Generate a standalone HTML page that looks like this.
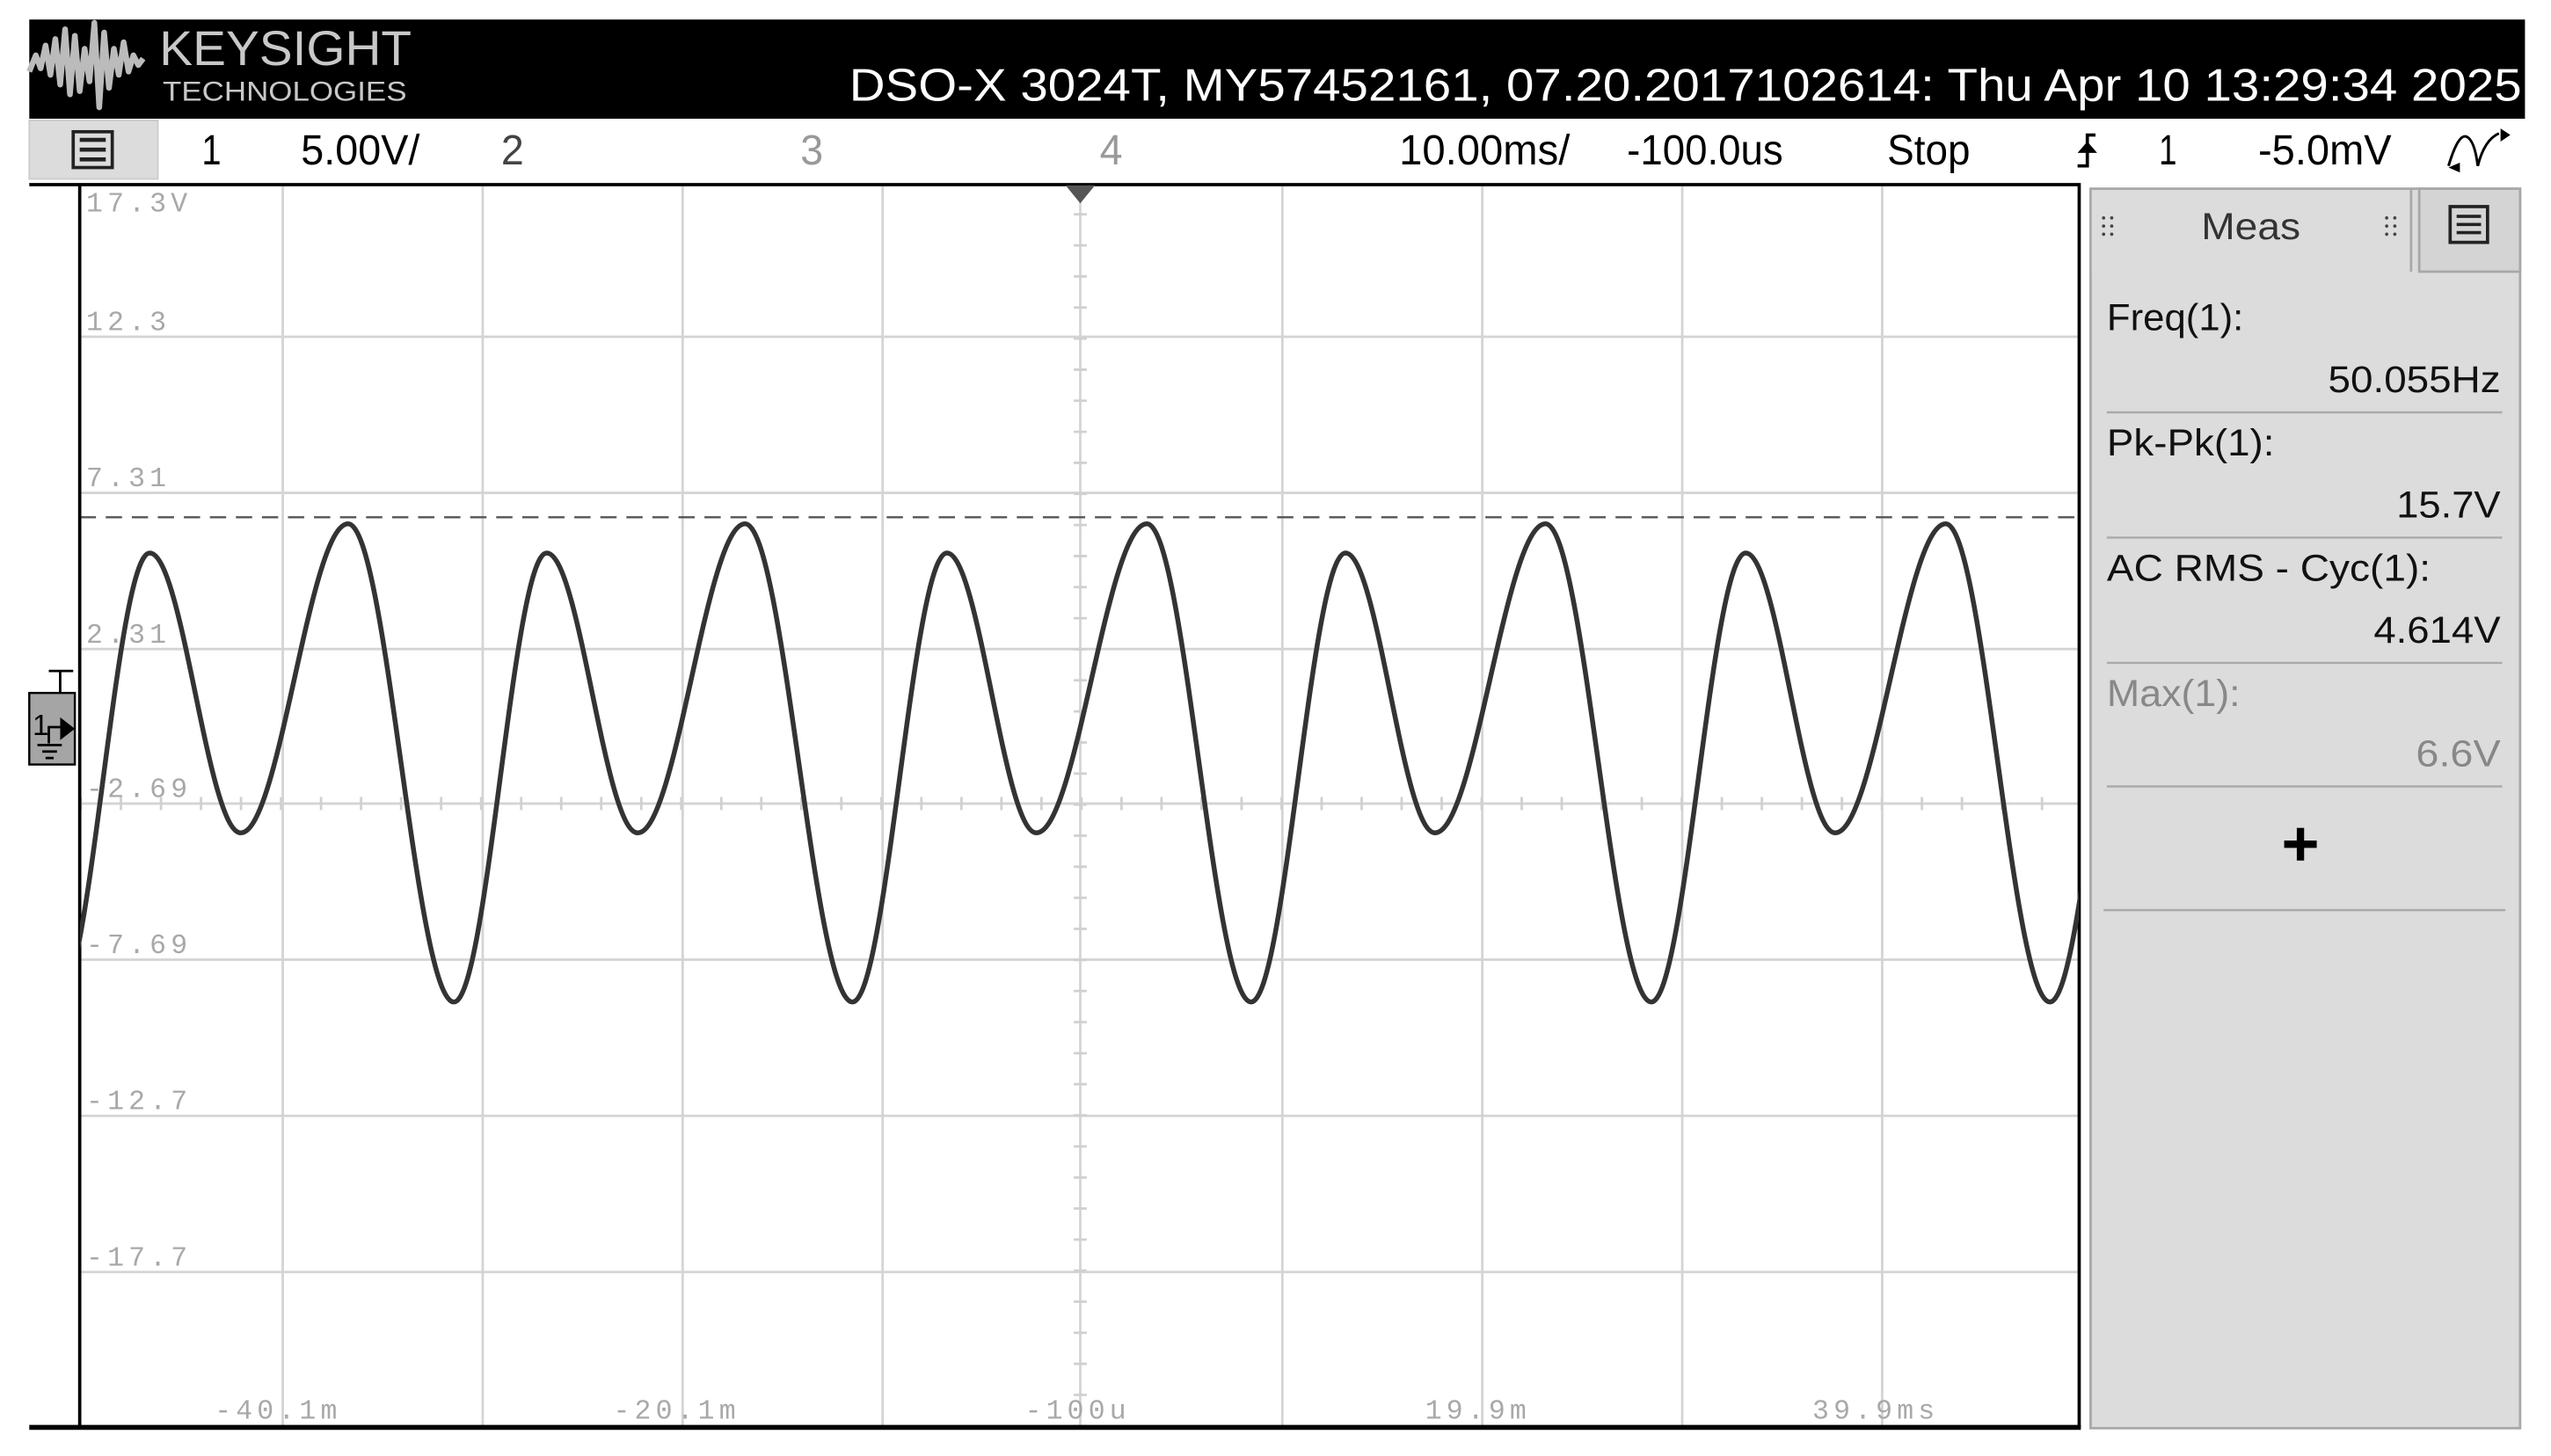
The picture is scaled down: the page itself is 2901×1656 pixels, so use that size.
<!DOCTYPE html>
<html><head><meta charset="utf-8">
<style>
html,body{margin:0;padding:0;background:#fff;width:2901px;height:1656px;overflow:hidden}
svg{display:block}
.t{font-family:"Liberation Sans",sans-serif}
.m{font-family:"Liberation Mono",monospace}
</style></head><body>
<svg width="2901" height="1656" viewBox="0 0 1568 895.1" preserveAspectRatio="none" xmlns="http://www.w3.org/2000/svg">
<defs><clipPath id="gc"><rect x="49" y="114" width="1229" height="763"/></clipPath></defs>
<rect width="1568" height="895.1" fill="#fff"/>
<!-- header -->
<rect x="18" y="12" width="1534" height="61" fill="#000"/>
<path d="M18 44 L22 34 L25 42 L28 28 L31 46 L34 24 L37 52 L40 18 L43 58 L46 22 L49 56 L52 30 L55 50 L58 14 L61 66 L64 20 L67 54 L70 30 L73 46 L76 26 L79 44 L82 34 L85 40 L88 36" fill="none" stroke="#bbb" stroke-width="3.5" stroke-linejoin="round"/>
<text x="98" y="40" class="t" font-size="30" fill="#c8c8c8" textLength="155" lengthAdjust="spacingAndGlyphs">KEYSIGHT</text>
<text x="100" y="62" class="t" font-size="17" fill="#c8c8c8" textLength="150" lengthAdjust="spacingAndGlyphs">TECHNOLOGIES</text>
<text x="522" y="62" class="t" font-size="28" fill="#fff" textLength="1028" lengthAdjust="spacingAndGlyphs">DSO-X 3024T, MY57452161, 07.20.2017102614: Thu Apr 10 13:29:34 2025</text>
<!-- toolbar -->
<rect x="18" y="74" width="79" height="36" fill="#dcdcdc" stroke="#ccc"/>
<rect x="45" y="81" width="24" height="22" fill="none" stroke="#222" stroke-width="2"/>
<path d="M49 86h16M49 92h16M49 98h16" stroke="#222" stroke-width="2.5"/>
<g class="t" font-size="26">
<text x="124" y="101" fill="#000" textLength="12" lengthAdjust="spacingAndGlyphs">1</text>
<text x="185" y="101" fill="#000" textLength="73" lengthAdjust="spacingAndGlyphs">5.00V/</text>
<text x="308" y="101" fill="#444" textLength="14" lengthAdjust="spacingAndGlyphs">2</text>
<text x="492" y="101" fill="#999" textLength="14" lengthAdjust="spacingAndGlyphs">3</text>
<text x="676" y="101" fill="#999" textLength="14" lengthAdjust="spacingAndGlyphs">4</text>
<text x="860" y="101" fill="#000" textLength="105" lengthAdjust="spacingAndGlyphs">10.00ms/</text>
<text x="1000" y="101" fill="#000" textLength="96" lengthAdjust="spacingAndGlyphs">-100.0us</text>
<text x="1160" y="101" fill="#000" textLength="51" lengthAdjust="spacingAndGlyphs">Stop</text>
<text x="1327" y="101" fill="#000" textLength="11" lengthAdjust="spacingAndGlyphs">1</text>
<text x="1388" y="101" fill="#000" textLength="82" lengthAdjust="spacingAndGlyphs">-5.0mV</text>
</g>
<path d="M1288 83h-5v19h-6" fill="none" stroke="#000" stroke-width="2"/>
<path d="M1277 94l6-7 6 7z" fill="#000"/>
<path d="M1505 102q6-20 11-18q5 2 7 18q4-16 13-20" fill="none" stroke="#000" stroke-width="1.6"/>
<path d="M1537 79l6 4-6 4z M1505 103l7-3v6z" fill="#000"/>
<!-- grid -->
<g stroke="#d4d4d4" stroke-width="1.5">
<path d="M173.8 114V877M296.7 114V877M419.6 114V877M542.5 114V877M788.2 114V877M911.1 114V877M1034 114V877M1156.9 114V877"/>
<path d="M49 207H1278M49 303H1278M49 399H1278M49 590H1278M49 686H1278M49 782H1278"/>
<path d="M664 114V877M49 494H1278"/>
</g>
<path d="M664 114V877" stroke="#d0d0d0" stroke-width="8" stroke-dasharray="1.5 17.6" stroke-dashoffset="-17"/>
<path d="M49 494H1278" stroke="#d0d0d0" stroke-width="8" stroke-dasharray="1.5 23.1"/>
<path d="M49 318H1278" stroke="#555" stroke-width="1.3" stroke-dasharray="10 6"/>
<path d="M18 113.5H1279M49 113V878M1278 113V878" stroke="#000" stroke-width="2" fill="none"/>
<path d="M18 877.5H1279" stroke="#000" stroke-width="3"/>
<path d="M655 114h18l-9 11z" fill="#555"/>
<g class="m" font-size="17" fill="#a8a8a8" letter-spacing="2.8">
<text x="53" y="130">17.3V</text>
<text x="53" y="203">12.3</text>
<text x="53" y="299">7.31</text>
<text x="53" y="395">2.31</text>
<text x="53" y="490">-2.69</text>
<text x="53" y="586">-7.69</text>
<text x="53" y="682">-12.7</text>
<text x="53" y="778">-17.7</text>
<text x="132" y="872">-40.1m</text>
<text x="377" y="872">-20.1m</text>
<text x="630" y="872">-100u</text>
<text x="876" y="872">19.9m</text>
<text x="1114" y="872">39.9ms</text>
</g>
<path clip-path="url(#gc)" fill="none" stroke="#333" stroke-width="3" stroke-linejoin="round" d="M35 616 C55.7 616 71.3 340 92 340 C112.4 340 127.6 512 148 512 C172 512 190 322 214 322 C237.7 322 255.3 616 279 616 C299.7 616 315.3 340 336 340 C356.4 340 371.6 512 392 512 C416 512 434 322 458 322 C482 322 500 616 524 616 C545.1 616 560.9 340 582 340 C602 340 617 512 637 512 C661.8 512 680.2 322 705 322 C728.3 322 745.7 616 769 616 C790.1 616 805.9 340 827 340 C847 340 862 512 882 512 C906.8 512 925.2 322 950 322 C973.7 322 991.3 616 1015 616 C1036.1 616 1051.9 340 1073 340 C1093 340 1108 512 1128 512 C1152.8 512 1171.2 322 1196 322 C1219.3 322 1236.7 616 1260 616 C1281.1 616 1296.9 340 1318 340"/>
<!-- ground marker -->
<path d="M30 412.5h15M37 412.5v13" stroke="#000" stroke-width="1.5"/>
<rect x="18" y="426" width="28" height="44" fill="#a5a5a5" stroke="#000" stroke-width="1.3"/>
<text x="20" y="452" class="t" font-size="18" fill="#000">1</text>
<path d="M30 457v-10h7" fill="none" stroke="#000" stroke-width="1.5"/>
<path d="M37 441l9 7-9 7z" fill="#000"/>
<path d="M23 458h15M26 462h9M28 466h5" stroke="#000" stroke-width="1.5"/>
<!-- meas panel -->
<rect x="1285" y="116" width="264" height="762" fill="#dcdcdc" stroke="#a8a8a8" stroke-width="1.5"/>
<rect x="1487" y="116" width="62" height="51" fill="#d4d4d4" stroke="#a8a8a8" stroke-width="1.5"/>
<rect x="1285.8" y="117" width="195.5" height="53" fill="#dcdcdc"/>
<path d="M1482 116V167" stroke="#a8a8a8" stroke-width="1.5"/>
<rect x="1506" y="127" width="23" height="22" fill="none" stroke="#222" stroke-width="2"/>
<path d="M1510 133h15M1510 138h15M1510 143h15" stroke="#222" stroke-width="2"/>
<g fill="#444"><circle cx="1293" cy="134" r="1"/><circle cx="1298" cy="134" r="1"/><circle cx="1293" cy="139" r="1"/><circle cx="1298" cy="139" r="1"/><circle cx="1293" cy="144" r="1"/><circle cx="1298" cy="144" r="1"/>
<circle cx="1467" cy="134" r="1"/><circle cx="1472" cy="134" r="1"/><circle cx="1467" cy="139" r="1"/><circle cx="1472" cy="139" r="1"/><circle cx="1467" cy="144" r="1"/><circle cx="1472" cy="144" r="1"/></g>
<g class="t" font-size="23">
<text x="1353" y="147" fill="#333" textLength="61" lengthAdjust="spacingAndGlyphs">Meas</text>
<text x="1295" y="203" fill="#111" textLength="84" lengthAdjust="spacingAndGlyphs">Freq(1):</text>
<text x="1537" y="241" fill="#111" text-anchor="end" textLength="106" lengthAdjust="spacingAndGlyphs">50.055Hz</text>
<text x="1295" y="280" fill="#111" textLength="103" lengthAdjust="spacingAndGlyphs">Pk-Pk(1):</text>
<text x="1537" y="318" fill="#111" text-anchor="end" textLength="64" lengthAdjust="spacingAndGlyphs">15.7V</text>
<text x="1295" y="357" fill="#111" textLength="199" lengthAdjust="spacingAndGlyphs">AC RMS - Cyc(1):</text>
<text x="1537" y="395" fill="#111" text-anchor="end" textLength="78" lengthAdjust="spacingAndGlyphs">4.614V</text>
<text x="1295" y="434" fill="#888" textLength="82" lengthAdjust="spacingAndGlyphs">Max(1):</text>
<text x="1537" y="471" fill="#888" text-anchor="end" textLength="52" lengthAdjust="spacingAndGlyphs">6.6V</text>
</g>
<path d="M1295 253.5H1538M1295 330.5H1538M1295 407.5H1538M1295 483.5H1538M1293 559.5H1540" stroke="#aaa" stroke-width="1.3"/>
<path d="M1404 519h20M1414 509v20" stroke="#000" stroke-width="4.5"/>
</svg>
</body></html>
